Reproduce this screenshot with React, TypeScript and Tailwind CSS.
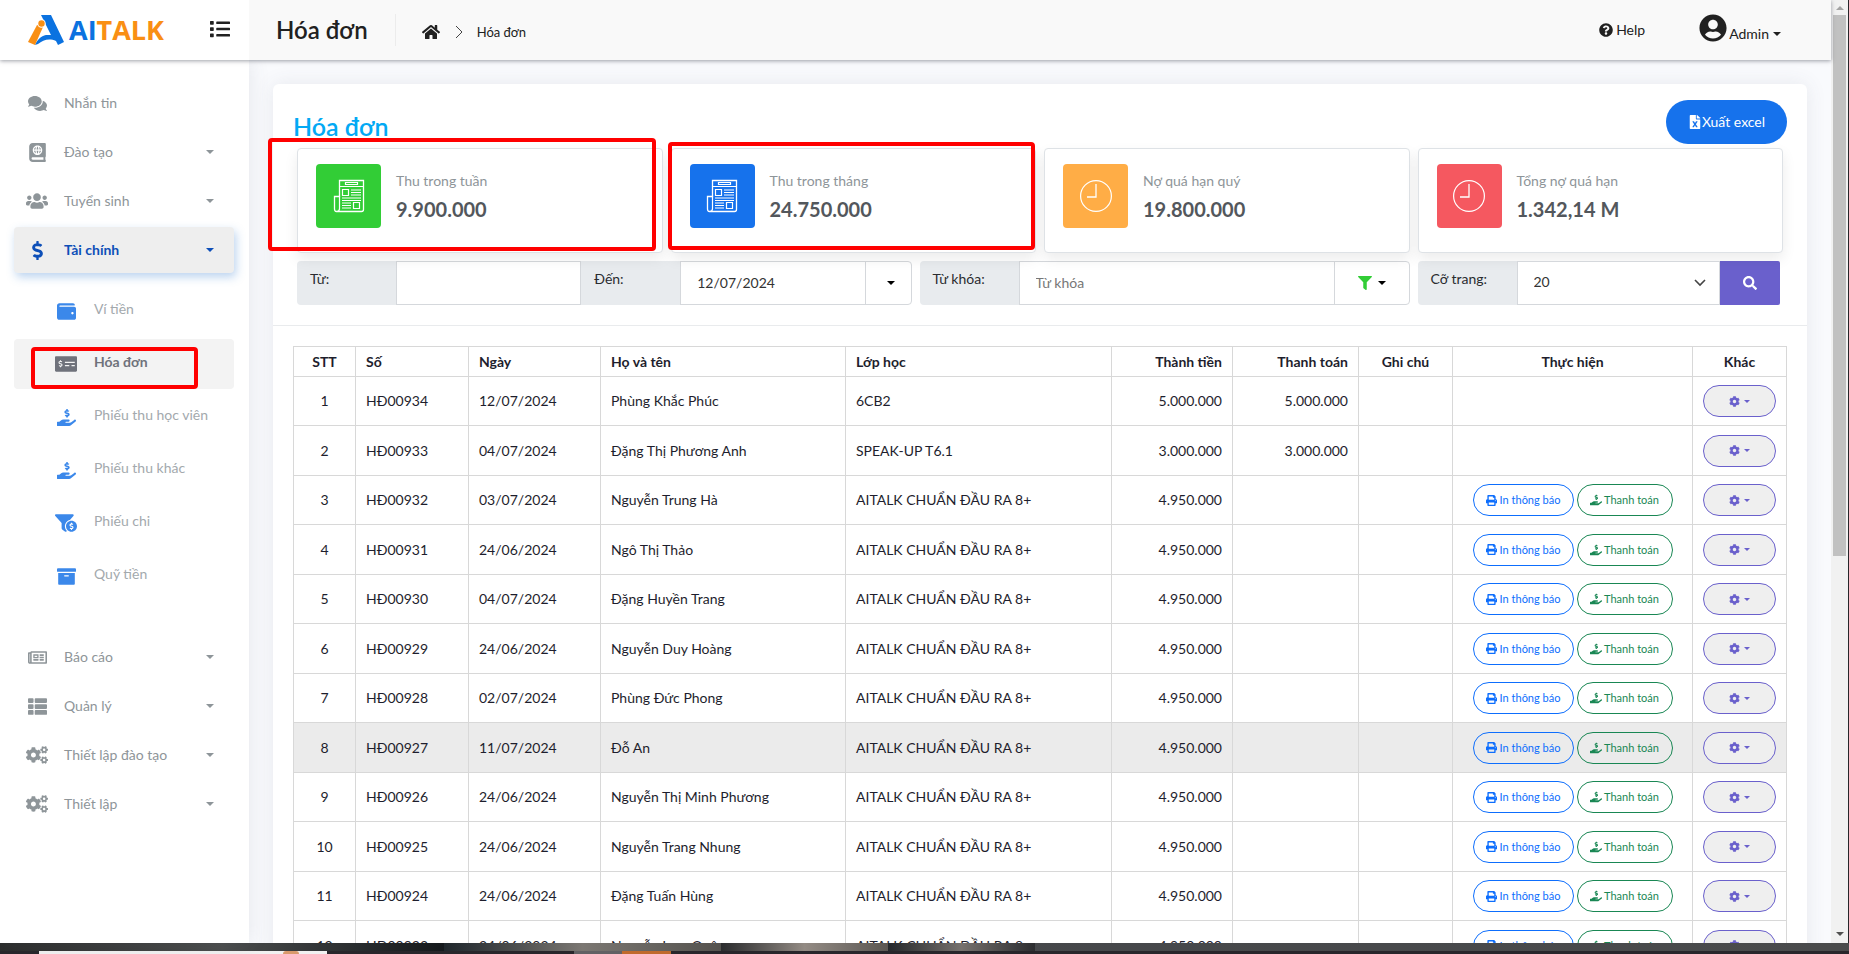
import type { ReactNode } from 'react';
import type { IconType } from 'react-icons';
import {
  FaArchive,
  FaAtlas,
  FaCog,
  FaCogs,
  FaComments,
  FaDollarSign,
  FaFileExcel,
  FaFilter,
  FaFunnelDollar,
  FaHandHoldingUsd,
  FaHome,
  FaList,
  FaMoneyCheckAlt,
  FaPrint,
  FaQuestionCircle,
  FaRegNewspaper,
  FaSearch,
  FaThList,
  FaUserCircle,
  FaUsers,
  FaWallet,
} from 'react-icons/fa';

type NavItem = { label: string; icon: IconType; caret?: boolean; active?: boolean };

const topNav: NavItem[] = [
  { label: 'Nhắn tin', icon: FaComments },
  { label: 'Đào tạo', icon: FaAtlas, caret: true },
  { label: 'Tuyển sinh', icon: FaUsers, caret: true },
  { label: 'Tài chính', icon: FaDollarSign, caret: true, active: true },
];

const subNav: NavItem[] = [
  { label: 'Ví tiền', icon: FaWallet },
  { label: 'Hóa đơn', icon: FaMoneyCheckAlt, active: true },
  { label: 'Phiếu thu học viên', icon: FaHandHoldingUsd },
  { label: 'Phiếu thu khác', icon: FaHandHoldingUsd },
  { label: 'Phiếu chi', icon: FaFunnelDollar },
  { label: 'Quỹ tiền', icon: FaArchive },
];

const bottomNav: NavItem[] = [
  { label: 'Báo cáo', icon: FaRegNewspaper, caret: true },
  { label: 'Quản lý', icon: FaThList, caret: true },
  { label: 'Thiết lập đào tạo', icon: FaCogs, caret: true },
  { label: 'Thiết lập', icon: FaCogs, caret: true },
];

type Invoice = {
  code: string;
  date: string;
  name: string;
  course: string;
  total: string;
  paid?: string;
};

const COURSE = 'AITALK CHUẨN ĐẦU RA 8+';

const invoices: Invoice[] = [
  { code: 'HĐ00934', date: '12/07/2024', name: 'Phùng Khắc Phúc', course: '6CB2', total: '5.000.000', paid: '5.000.000' },
  { code: 'HĐ00933', date: '04/07/2024', name: 'Đặng Thị Phương Anh', course: 'SPEAK-UP T6.1', total: '3.000.000', paid: '3.000.000' },
  { code: 'HĐ00932', date: '03/07/2024', name: 'Nguyễn Trung Hà', course: COURSE, total: '4.950.000' },
  { code: 'HĐ00931', date: '24/06/2024', name: 'Ngô Thị Thảo', course: COURSE, total: '4.950.000' },
  { code: 'HĐ00930', date: '04/07/2024', name: 'Đặng Huyền Trang', course: COURSE, total: '4.950.000' },
  { code: 'HĐ00929', date: '24/06/2024', name: 'Nguyễn Duy Hoàng', course: COURSE, total: '4.950.000' },
  { code: 'HĐ00928', date: '02/07/2024', name: 'Phùng Đức Phong', course: COURSE, total: '4.950.000' },
  { code: 'HĐ00927', date: '11/07/2024', name: 'Đỗ An', course: COURSE, total: '4.950.000' },
  { code: 'HĐ00926', date: '24/06/2024', name: 'Nguyễn Thị Minh Phương', course: COURSE, total: '4.950.000' },
  { code: 'HĐ00925', date: '24/06/2024', name: 'Nguyễn Trang Nhung', course: COURSE, total: '4.950.000' },
  { code: 'HĐ00924', date: '24/06/2024', name: 'Đặng Tuấn Hùng', course: COURSE, total: '4.950.000' },
  { code: 'HĐ00923', date: '24/06/2024', name: 'Nguyễn Lam Quân', course: COURSE, total: '4.950.000' },
];

const columns = [
  { label: 'STT', className: 'w-[62px] text-center' },
  { label: 'Số', className: 'w-[113px] text-left' },
  { label: 'Ngày', className: 'w-[132px] text-left' },
  { label: 'Họ và tên', className: 'w-[245px] text-left' },
  { label: 'Lớp học', className: 'w-[266px] text-left' },
  { label: 'Thành tiền', className: 'w-[121px] text-right' },
  { label: 'Thanh toán', className: 'w-[126px] text-right' },
  { label: 'Ghi chú', className: 'w-[94px] text-center' },
  { label: 'Thực hiện', className: 'w-[240px] text-center' },
  { label: 'Khác', className: 'w-[94px] text-center' },
];

function Caret({ small }: { small?: boolean }) {
  return small ? (
    <span className="inline-block border-x-[3px] border-t-[3px] border-x-transparent border-t-current" />
  ) : (
    <span className="inline-block border-x-4 border-t-4 border-x-transparent border-t-current" />
  );
}

function Logo() {
  return (
    <a href="#" className="flex items-center gap-[5px]">
      <svg viewBox="0 0 36 30" className="h-[30px] w-9">
        <path d="M13 0h10l13 27-6 3-2-4c-7-3-13-1-18 3l-3 1c2-5 6-9 11-10h5L17 8z" fill="#0b72e0" />
        <path d="M9 10l6 2-8 18-7-3z" fill="#f98f14" />
        <circle cx="13.500" cy="8.500" r="4.200" fill="#fff" />
        <circle cx="13.500" cy="8.500" r="3.200" fill="#f98f14" />
      </svg>
      <span className="font-['Open_Sans',sans-serif] text-[27px] leading-8 font-bold text-[#0b72e0]">
        AI<span className="text-[#f98f14]">TALK</span>
      </span>
    </a>
  );
}

function NavLink({ label, icon: Icon, caret, active }: NavItem) {
  return (
    <a
      href="#"
      className={
        active
          ? 'flex h-[46px] items-center rounded bg-[#eeeeee] pr-5 font-bold text-[#0d4fb8] shadow-[2px_4px_10px_rgba(60,130,210,0.35)]'
          : 'flex h-[46px] items-center rounded pr-5 text-[#8e9599]'
      }
    >
      <span className="flex w-[50px] justify-center pr-1">
        <Icon className={label === 'Tuyển sinh' || Icon === FaCogs ? 'size-[22px]' : 'size-[19px]'} />
      </span>
      <span className="flex-1">{label}</span>
      {caret && <Caret />}
    </a>
  );
}

function SubLink({ label, icon: Icon, active }: NavItem) {
  return (
    <a
      href="#"
      className={
        active
          ? 'relative flex h-[50px] items-center rounded bg-[#f3f3f3] font-bold text-[#6f727b]'
          : 'flex h-[50px] items-center text-[#a3a9ad]'
      }
    >
      <span className="flex w-20 justify-end pr-4">
        <span className={active ? 'flex w-6 justify-center' : 'flex w-6 justify-center text-[#3b88ea]'}>
          <Icon className={Icon === FaMoneyCheckAlt || Icon === FaFunnelDollar ? 'size-[22px]' : 'size-[19px]'} />
        </span>
      </span>
      <span className="pb-1">{label}</span>
      {active && (
        <span className="pointer-events-none absolute top-2 right-9 bottom-0 left-[17px] rounded-sm border-4 border-[#ff0000]" />
      )}
    </a>
  );
}

function NewsIcon() {
  return (
    <svg viewBox="0 0 32 34" className="h-[34px] w-8" fill="none" stroke="#fff">
      <path d="M6.500 1.500h24v29q0 2-2 2H3.500q-2 0-2-2.500V17.500h5z" strokeWidth="1.300" />
      <path d="M6.500 17v12.500q0 3-2.500 3M6.500 7.500h24" strokeWidth="1.200" />
      <path d="M12.500 3.500h12v2h-12zM9.500 10.500h6v6h-6zM20.500 23.500h6v6h-6z" strokeWidth="1.200" />
      <path d="M18 11h10M18 13.500h10M18 16h10M9 19h19M9 21.500h19M9 24h9M9 26.500h9M9 29h9" strokeWidth="1" />
    </svg>
  );
}

function ClockIcon() {
  return (
    <svg viewBox="0 0 34 34" className="size-[34px]" fill="none" stroke="#fff">
      <circle cx="17" cy="17" r="15.400" strokeWidth="1.200" />
      <path d="M17 5v13H8" strokeWidth="1.300" />
    </svg>
  );
}

type StatProps = { label: string; value: string; box: string; icon: ReactNode; mark?: string };

function StatCard({ label, value, box, icon, mark }: StatProps) {
  return (
    <div className="relative flex h-[105px] items-start gap-[15px] rounded border border-[#dee2e6] bg-white px-[18px] pt-[15px] shadow-[0_6px_14px_rgba(0,0,0,0.08)]">
      <div className={`flex h-16 w-[65px] items-center justify-center rounded ${box}`}>{icon}</div>
      <div className="pt-1.5">
        <div className="leading-[21px] text-[#8e9599]">{label}</div>
        <div className="pt-[3px] text-xl leading-[30px] font-bold text-[#53575c]">{value}</div>
      </div>
      {mark && (
        <div className={`pointer-events-none absolute z-10 rounded-sm border-4 border-[#ff0000] ${mark}`} />
      )}
    </div>
  );
}

const addon = 'flex w-[99px] shrink-0 items-start bg-[#e8ebee] px-[13px] pt-[7px] leading-[21px] text-[#2a2c30]';
const field = 'h-11 w-full min-w-0 flex-1 border border-[#d5d8dc] bg-white px-4 pb-0.5 text-[#333] outline-none placeholder:text-[#777]';
const pill = 'inline-flex h-8 items-center justify-center rounded-full border';

function Filters() {
  return (
    <form className="grid grid-cols-12 gap-2">
      <div className="col-span-5 flex h-11">
        <label htmlFor="from" className={`${addon} rounded-l`}>Từ:</label>
        <input id="from" className={field} />
        <label htmlFor="to" className={addon}>Đến:</label>
        <input id="to" defaultValue="12/07/2024" className={field} />
        <button type="button" aria-label="Chọn ngày" className="-ml-px flex w-[47px] shrink-0 items-center justify-center rounded-r border border-[#d5d8dc] pl-1.5">
          <Caret />
        </button>
      </div>
      <div className="col-span-4 flex h-11">
        <label htmlFor="keyword" className={`${addon} rounded-l`}>Từ khóa:</label>
        <input id="keyword" placeholder="Từ khóa" className={field} />
        <button type="button" aria-label="Lọc" className="-ml-px flex w-[76px] shrink-0 items-center justify-center gap-1.5 rounded-r border border-[#d5d8dc]">
          <FaFilter className="size-3.5 text-[#32cd36]" />
          <Caret />
        </button>
      </div>
      <div className="col-span-3 flex h-11 pr-[3px]">
        <label htmlFor="size" className={`${addon} rounded-l`}>Cỡ trang:</label>
        <div className="relative min-w-0 flex-1">
          <select id="size" className={`${field} appearance-none`} defaultValue="20">
            <option>20</option>
            <option>50</option>
          </select>
          <svg viewBox="0 0 12 8" className="pointer-events-none absolute top-[18px] right-3.5 h-2 w-3" fill="none" stroke="#444" strokeWidth="1.600">
            <path d="M1 1l5 5 5-5" />
          </svg>
        </div>
        <button type="submit" aria-label="Tìm" className="flex w-[60px] shrink-0 items-center justify-center rounded-r-xs bg-[#6a60cc] text-white">
          <FaSearch className="size-3.5" />
        </button>
      </div>
    </form>
  );
}

function InvoiceTable() {
  const cell = 'border border-[#d8d8d8] px-2.5';
  return (
    <table className="w-full table-fixed border-collapse text-[#1e1e2d]">
      <thead>
        <tr className="h-[30px]">
          {columns.map((col) => (
            <th key={col.label} className={`${cell} font-bold ${col.className}`}>
              {col.label}
            </th>
          ))}
        </tr>
      </thead>
      <tbody>
        {invoices.map((row, i) => (
          <tr key={row.code} className={`h-[49px] even:h-[50px] ${i === 7 ? 'bg-[#ebebeb]' : ''}`}>
            <td className={`${cell} text-center`}>{i + 1}</td>
            <td className={cell}>{row.code}</td>
            <td className={cell}>{row.date}</td>
            <td className={cell}>{row.name}</td>
            <td className={cell}>{row.course}</td>
            <td className={`${cell} text-right`}>{row.total}</td>
            <td className={`${cell} text-right`}>{row.paid}</td>
            <td className={cell} />
            <td className={cell}>
              {!row.paid && (
                <div className="flex justify-center gap-[3px]">
                  <button type="button" className={`${pill} w-[101px] gap-[3px] border-[#0d6efd] text-[11px] text-[#0d6efd]`}>
                    <FaPrint className="size-[11px]" />
                    In thông báo
                  </button>
                  <button type="button" className={`${pill} w-24 gap-0.5 border-[#198754] text-[11px] text-[#198754]`}>
                    <FaHandHoldingUsd className="size-3" />
                    Thanh toán
                  </button>
                </div>
              )}
            </td>
            <td className={cell}>
              <button type="button" aria-label="Khác" className={`${pill} w-full gap-1 border-[#6a60cc] bg-[#efefef] align-middle text-[#6a60cc]`}>
                <FaCog className="size-[11px]" />
                <Caret small />
              </button>
            </td>
          </tr>
        ))}
      </tbody>
    </table>
  );
}

function Scrollbar() {
  return (
    <div className="flex w-[18px] shrink-0 flex-col items-center border-r border-[#26262a] bg-[#f1f1f1]">
      <div className="flex h-[15px] items-center">
        <span className="border-x-4 border-b-4 border-x-transparent border-b-[#a3a3a3]" />
      </div>
      <div className="h-[541px] w-[13px] bg-[#c1c1c1]" />
      <div className="flex flex-1 items-end pb-[7px]">
        <span className="border-x-4 border-t-4 border-x-transparent border-t-[#505050]" />
      </div>
    </div>
  );
}

export default function App() {
  return (
    <div className="flex h-screen flex-col overflow-hidden bg-[#26262a] font-[Lato,'Noto_Sans',sans-serif] text-sm">
      <div className="flex min-h-0 flex-1">
        <div className="flex min-w-0 flex-1 flex-col bg-[#f9fafd]">
          <header className="z-20 flex h-[60px] shrink-0 bg-[#f9f9f9] text-[#212121] shadow-[0_1px_4px_rgba(60,64,80,0.5)]">
            <div className="flex w-[249px] shrink-0 items-center justify-between bg-white pr-[19px] pl-7">
              <Logo />
              <button type="button" aria-label="Menu" className="pb-0.5">
                <FaList className="size-5" />
              </button>
            </div>
            <div className="flex flex-1 items-center pl-[27px]">
              <h1 className="text-2xl leading-8 font-semibold">Hóa đơn</h1>
              <nav className="ml-[27px] flex h-8 items-center border-l border-[#ececec] pt-1 pl-[26px]">
                <a href="#" aria-label="Trang chủ">
                  <FaHome className="size-[18px]" />
                </a>
                <svg viewBox="0 0 8 14" className="ml-[15px] h-3.5 w-2" fill="none" stroke="#444">
                  <path d="M1 1l6 6-6 6" />
                </svg>
                <span className="ml-3.5 text-[13px]">Hóa đơn</span>
              </nav>
            </div>
            <div className="flex items-center gap-[54px] pr-[50px]">
              <a href="#" className="flex items-center gap-[3px]">
                <FaQuestionCircle className="size-3.5" />
                Help
              </a>
              <button type="button" className="flex items-center gap-0.5">
                <FaUserCircle className="mb-1 size-7" />
                <span className="pt-2">Admin</span>
                <span className="flex pt-2 pl-0.5">
                  <Caret />
                </span>
              </button>
            </div>
          </header>

          <div className="flex min-h-0 flex-1">
            <aside className="z-10 w-[249px] shrink-0 overflow-hidden bg-white pt-5 pr-[15px] pl-3.5 shadow-[0_0_20px_rgba(70,80,100,0.12)]">
              <nav className="flex flex-col gap-[3px]">
                {topNav.map((item) => (
                  <NavLink key={item.label} {...item} />
                ))}
                <div className="flex flex-col gap-[3px] pt-2.5 pb-[30px]">
                  {subNav.map((item) => (
                    <SubLink key={item.label} {...item} />
                  ))}
                </div>
                {bottomNav.map((item) => (
                  <NavLink key={item.label} {...item} />
                ))}
              </nav>
            </aside>

            <main className="min-w-0 flex-1 overflow-hidden px-6 pt-6">
              <section className="rounded-md bg-white shadow-[0_0_20px_rgba(70,80,100,0.1)]">
                <div className="border-b border-[#e9ebed] pt-4 pb-5">
                  <div className="mb-1 flex items-end justify-between px-5">
                    <h2 className="text-[25px] leading-9 font-semibold text-[#03a9f4]">Hóa đơn</h2>
                    <button type="button" className="flex h-11 w-[121px] items-center justify-center rounded-full bg-[#1672ec] text-white">
                      <FaFileExcel className="size-3.5" />
                      Xuất excel
                    </button>
                  </div>
                  <div className="flex flex-col gap-2 px-6">
                    <div className="grid grid-cols-4 gap-2">
                      <StatCard
                        label="Thu trong tuần"
                        value="9.900.000"
                        box="bg-[#32cd36]"
                        icon={<NewsIcon />}
                        mark="-top-[11px] right-[6px] bottom-[1px] -left-[30px]"
                      />
                      <StatCard
                        label="Thu trong tháng"
                        value="24.750.000"
                        box="bg-[#1672ec]"
                        icon={<NewsIcon />}
                        mark="-top-[7px] right-0 bottom-[2px] -left-[4px]"
                      />
                      <StatCard label="Nợ quá hạn quý" value="19.800.000" box="bg-[#ffad46]" icon={<ClockIcon />} />
                      <StatCard label="Tổng nợ quá hạn" value="1.342,14 M" box="bg-[#f55860]" icon={<ClockIcon />} />
                    </div>
                    <Filters />
                  </div>
                </div>
                <div className="p-5">
                  <InvoiceTable />
                </div>
              </section>
            </main>
          </div>
        </div>
        <Scrollbar />
      </div>

      {/* Desktop wallpaper and taskbar edge */}
      <div className="h-2 shrink-0 bg-linear-to-r from-[#3a3b3b] via-[#45474a] to-[#4a4b4c]">
        <div className="flex h-full">
          <div className="w-[24%] bg-linear-to-r from-[#2b2c2c] via-[#4b4d4d] to-[#15191c]" />
          <div className="w-[15%] bg-linear-to-r from-[#20272c] via-[#7b7772] to-[#54524e]" />
          <div className="w-[9%] bg-linear-to-r from-[#2b2c2e] via-[#938b84] to-[#5b5753]" />
          <div className="w-[8%] bg-linear-to-r from-[#26282b] via-[#77726e] to-[#2c2d30]" />
        </div>
      </div>
      <div className="flex h-[3px] shrink-0 bg-[#28262b] pl-[39px]">
        <div className="flex w-72 justify-end bg-[#f1f1f1] pr-7">
          <span className="w-4 rounded-t-full bg-[#d99a6c]" />
        </div>
        <div className="ml-[247px] w-12 bg-[#626164]" />
        <div className="w-[49px] bg-[#c06a2c]" />
      </div>
    </div>
  );
}
